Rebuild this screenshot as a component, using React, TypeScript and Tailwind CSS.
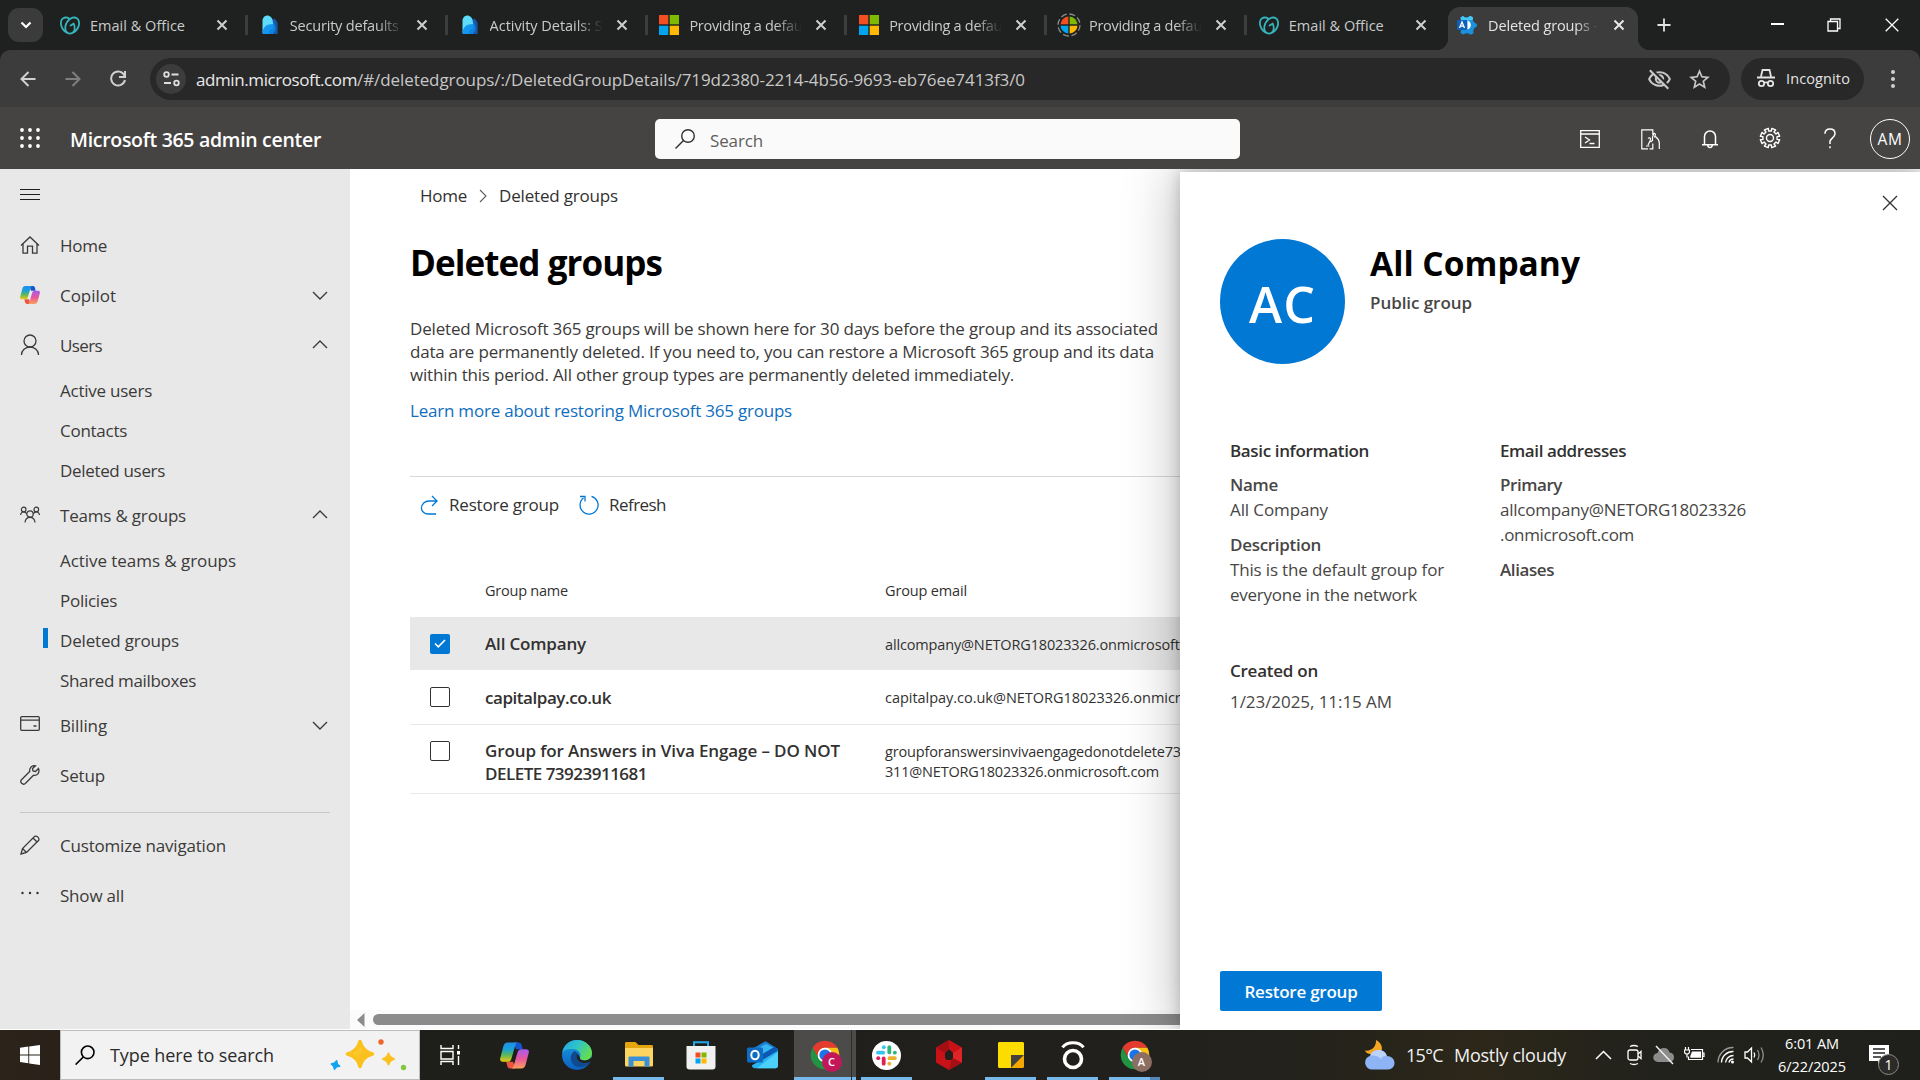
import { useLayoutEffect, useRef } from "react";
import type { ReactNode } from "react";
import { SiGodaddy } from "react-icons/si";
import { MdOutlineVisibilityOff, MdStarBorder } from "react-icons/md";

/* Single line of text whose letter spacing is adjusted so that it spans exactly `w` pixels. */
function Fit({ w, className = "", children }: { w: number; className?: string; children: string }) {
  const ref = useRef<HTMLSpanElement>(null);
  useLayoutEffect(() => {
    const el = ref.current;
    if (!el) return;
    el.style.letterSpacing = "0px";
    const natural = el.getBoundingClientRect().width;
    el.style.letterSpacing = `${(w - natural) / children.length}px`;
  }, [w, children]);
  return (
    <span ref={ref} className={`inline-block w-max shrink-0 whitespace-pre ${className}`}>
      {children}
    </span>
  );
}

type SvgProps = { w: number; h: number; vb?: string; className?: string; sw?: number; children: ReactNode };
function Line({ w, h, vb, className = "", sw = 1.3, children }: SvgProps) {
  return (
    <svg width={w} height={h} viewBox={vb ?? `0 0 ${w} ${h}`} fill="none" stroke="currentColor" strokeWidth={sw} className={`shrink-0 ${className}`}>
      {children}
    </svg>
  );
}

/* ---------- favicons ---------- */
const GoDaddy = () => <SiGodaddy className="size-[21px] text-[#35b5bd]" />;
const Entra = () => (
  <svg width="20" height="20" viewBox="0 0 20 20">
    <path d="M11 4l3-.3c2 .6 3.600 2.800 3.600 5V19H9z" fill="#1a56a8" />
    <path d="M5 9l7-3c3 2 3.500 5 3.500 9L13 19H5z" fill="#0a84e0" />
    <path d="M2.500 18V6C2.500 2.500 5 .3 8 .5c3.500.8 5 4 5 8v2L6 15z" fill="#5fdcfb" />
    <path d="M2.500 19c0-6 3-10 10.500-10v5c-3 0-4 2-4 5z" fill="#1597f0" />
  </svg>
);
const MsLogo = () => (
  <svg width="20" height="20" viewBox="0 0 20 20">
    <path fill="#f25022" d="M0 0h9.300v9.300H0z" />
    <path fill="#7fba00" d="M10.700 0H20v9.300h-9.300z" />
    <path fill="#00a4ef" d="M0 10.700h9.300V20H0z" />
    <path fill="#ffb900" d="M10.700 10.700H20V20h-9.300z" />
  </svg>
);
const MsLoading = () => (
  <svg width="24" height="24" viewBox="0 0 24 24" className="shrink-0">
    <path fill="#f25022" d="M11.300 11.300V3.500a8.500 8.500 0 0 0-7.800 7.800z" />
    <path fill="#7fba00" d="M12.700 11.300V3.500a8.500 8.500 0 0 1 7.800 7.800z" />
    <path fill="#00a4ef" d="M11.300 12.700v7.800a8.500 8.500 0 0 1-7.800-7.800z" />
    <path fill="#ffb900" d="M12.700 12.700v7.800a8.500 8.500 0 0 0 7.800-7.800z" />
    <circle cx="12" cy="12" r="11" fill="none" stroke="#8a8a8a" strokeWidth="1.300" strokeDasharray="6 2.640" />
  </svg>
);
const AdminIcon = () => (
  <svg width="20" height="20" viewBox="0 0 20 20" className="shrink-0">
    <path d="M6 1l2 1.500h3L13 .8l3 1.500-.3 3 2 2.500 2.200 1.200v2.500l-2.500 1.500-1.200 3 .3 2.500-3 1.300-2.500-1.500h-2L6.500 19.500l-3-1.500.5-3V5L3.500 2.500z" fill="#1b8fe0" />
    <path d="M6 1l2 1.500h3L13 .8l3 1.500-.3 3H4L3.500 2.500z" fill="#46c8f5" />
    <rect x="0" y="5" width="10" height="10" rx="1" fill="#0f5fb8" />
    <path d="M10.500 5.500a4.700 4.700 0 0 1 0 9z" fill="#fff" />
    <path d="M2.500 13L5 7l2.500 6M3.300 11.200h3.400" fill="none" stroke="#fff" strokeWidth="1.300" />
  </svg>
);

const CloseX = ({ bright = false }: { bright?: boolean }) => (
  <Line w={12} h={12} sw={2} className={bright ? "text-[#e8e8e8]" : "text-[#cfcfcf]"}>
    <path d="M1.500 1.500l9 9M10.500 1.500l-9 9" />
  </Line>
);

const tabs: { icon: ReactNode; text: string; w: number; fade: boolean; sep: boolean }[] = [
  { icon: <GoDaddy />, text: "Email & Office", w: 95, fade: false, sep: true },
  { icon: <Entra />, text: "Security defaults", w: 109, fade: true, sep: true },
  { icon: <Entra />, text: "Activity Details: S", w: 113, fade: true, sep: true },
  { icon: <MsLogo />, text: "Providing a defau", w: 113, fade: true, sep: true },
  { icon: <MsLogo />, text: "Providing a defau", w: 113, fade: true, sep: true },
  { icon: <MsLoading />, text: "Providing a defau", w: 113, fade: true, sep: true },
  { icon: <GoDaddy />, text: "Email & Office", w: 95, fade: false, sep: false },
];

function TabStrip() {
  return (
    <div className="flex h-[50px] items-start bg-[#1f2120] text-[14.5px] text-[#c9cac9]">
      <div className="mt-2 ml-2 flex h-[34px] w-[35px] items-center justify-center rounded-[11px] bg-[#3a3b3a]">
        <Line w={12} h={8} sw={2.2} className="text-white">
          <path d="M1.500 1.500L6 6l4.500-4.500" />
        </Line>
      </div>
      <div className="ml-[3px] flex h-[50px] w-[1399px]">
        {tabs.map((t, i) => (
          <div key={i} className="flex w-[199.8px] shrink-0 items-center pl-[14px]">
            <div className="flex w-5 shrink-0 justify-center">{t.icon}</div>
            <div className={t.fade ? "ml-[10px] w-[114px] shrink-0 overflow-hidden [mask-image:linear-gradient(to_right,black_76%,transparent_99%)]" : "ml-[10px] w-[114px] shrink-0"}>
              <Fit w={t.w} className="translate-y-px">{t.text}</Fit>
            </div>
            <div className="ml-3"><CloseX /></div>
            {t.sep && <div className="ml-[17px] h-5 w-[3px] shrink-0 bg-[#3c3d3c]" />}
          </div>
        ))}
      </div>
      <div className="relative mt-[7px] ml-[3px] flex h-[43px] w-[190px] items-center rounded-t-[12px] bg-[#3c3c3c] pb-[7px] pl-[9px] text-[#e3e3e3]">
        <div className="absolute bottom-0 -left-3 size-3 bg-[radial-gradient(circle_at_0_0,transparent_12px,#3c3c3c_12.500px)]" />
        <div className="absolute -right-3 bottom-0 size-3 bg-[radial-gradient(circle_at_100%_0,transparent_12px,#3c3c3c_12.500px)]" />
        <AdminIcon />
        <div className="ml-[11px] w-[110px] [mask-image:linear-gradient(to_right,black_80%,transparent)]">
          <Fit w={110} className="translate-y-px">Deleted groups -</Fit>
        </div>
        <div className="ml-[15px]"><CloseX bright /></div>
      </div>
      <div className="flex h-[50px] flex-1 items-center text-[#e3e3e3]">
        <Line w={14} h={14} sw={1.8} className="ml-[19px]"><path d="M7 .5v13M.5 7h13" /></Line>
        <div className="ml-[100px] h-[1.500px] w-[13px] -translate-y-px bg-white" />
        <Line w={14} h={14} sw={1.3} className="ml-[43px] text-white">
          <path d="M1 3.500h9.500V13H1zM3.500 3.500V1H13v9.500h-2.500" />
        </Line>
        <Line w={14} h={14} sw={1.3} className="ml-[44px] text-white"><path d="M.7.700l12.600 12.600M13.300.7L.7 13.300" /></Line>
      </div>
    </div>
  );
}

function AddressBar() {
  return (
    <div className="bg-[#1f2120]">
      <div className="flex h-[57px] items-center rounded-t-[10px] bg-[#3c3c3c]">
        <Line w={16} h={16} sw={2} className="ml-5 text-[#cfd0d0]"><path d="M15.500 8H1.800M8.500 1L1.500 8l7 7" /></Line>
        <Line w={16} h={16} sw={2} className="ml-[29px] text-[#7f7f7f]"><path d="M.5 8h13.700M7.500 1l7 7-7 7" /></Line>
        <Line w={18} h={18} sw={2} className="ml-7 text-[#cfd0d0]"><path d="M15.500 5.500A7 7 0 1 0 16 10M16 1v6h-6" /></Line>
        <div className="ml-[23px] flex h-[42px] w-[1580px] items-center rounded-full bg-[#282828]">
          <div className="ml-[6px] flex size-[30px] shrink-0 items-center justify-center rounded-full bg-[#3c3c3c]">
            <Line w={17} h={16} sw={1.8} className="text-[#dedede]">
              <circle cx="3.500" cy="3.500" r="2.300" /><path d="M8.500 3.500h7M1 12h7" /><circle cx="13.500" cy="12" r="2.300" />
            </Line>
          </div>
          <div className="ml-[10px] flex w-[1451px] translate-y-px text-[17px] text-[#c7c7c7]">
            <Fit w={161} className="text-[#e8e8e8]">admin.microsoft.com</Fit>
            <Fit w={668}>/#/deletedgroups/:/DeletedGroupDetails/719d2380-2214-4b56-9693-eb76ee7413f3/0</Fit>
          </div>
          <MdOutlineVisibilityOff className="size-[25px] shrink-0 translate-y-px text-[#c7c7c7]" />
          <MdStarBorder className="ml-[15px] size-[25px] shrink-0 translate-y-px text-[#c7c7c7]" />
        </div>
        <div className="ml-[11px] flex h-[42px] w-[123px] items-center rounded-full bg-[#282828] text-[14.5px] text-[#e3e3e3]">
          <svg width="18" height="20" viewBox="0 0 18 20" className="mr-[11px] ml-4 -translate-y-px" fill="none" stroke="currentColor" strokeWidth="1.800">
            <path d="M4 8.500L5.500 2h7L14 8.500M0 9.500h18" /><circle cx="4.500" cy="15.500" r="2.700" /><circle cx="13.500" cy="15.500" r="2.700" /><path d="M7 14.800q2-1 4 0" />
          </svg>
          <Fit w={64}>Incognito</Fit>
        </div>
        <svg width="6" height="22" viewBox="0 0 6 22" className="ml-[26px]" fill="#cfd0d0">
          <circle cx="3" cy="4" r="2" /><circle cx="3" cy="11" r="2" /><circle cx="3" cy="18" r="2" />
        </svg>
      </div>
    </div>
  );
}

function gearPath(cx: number, cy: number, ro: number, ri: number, n: number) {
  const pts: string[] = [];
  for (let i = 0; i < n; i++) {
    const a = ((i + 0.5) / n) * Math.PI * 2 - Math.PI / 2;
    const s = Math.PI / n;
    [[-0.5, ri], [-0.55, ro], [0.55, ro], [0.5, ri]].forEach(([k, r]) => {
      pts.push(`${(cx + Math.cos(a + k * s) * r).toFixed(2)} ${(cy + Math.sin(a + k * s) * r).toFixed(2)}`);
    });
  }
  return `M${pts.join("L")}Z`;
}

function Header() {
  return (
    <div className="flex h-[62px] items-center bg-[#464443] pt-[2px] text-white">
      <svg width="20" height="20" viewBox="0 0 20 20" fill="#fff" className="ml-5 -translate-y-px">
        {[2, 10, 18].map((y) => [2, 10, 18].map((x) => <circle key={`${x}-${y}`} cx={x} cy={y} r="1.900" />))}
      </svg>
      <div className="ml-[30px] w-[585px] text-[19.5px] font-semibold"><Fit w={251} className="translate-y-px">Microsoft 365 admin center</Fit></div>
      <div className="flex h-10 w-[585px] items-center rounded-[5px] bg-[#fafafa] pl-5 text-[17px] text-[#605e5c]">
        <Line w={20} h={20} sw={1.4} className="text-[#323130]"><circle cx="13" cy="7" r="6.300" /><path d="M8.500 11.500L.5 19.500" /></Line>
        <Fit w={53} className="ml-[15px] translate-y-[2px]">Search</Fit>
      </div>
      <Line w={20} h={18} className="ml-[340px]"><path d="M.7.700h18.600v16.600H.7zM.7 4h18.600M5 7l4.500 3L5 13M9.500 13.500h5" /></Line>
      <Line w={19} h={21} className="ml-[41px]" sw={1.2}>
        <path d="M7 19.800H.8V.8h11v5M5 17h3.500M11.800 14.500v5.300H8.500M7 9.500c1.500-1.500 3.500-.5 2 2.500l-2 4M9.500 13l2-1.500V8l1.300-3.500c1-.5 1.700.3 1.500 1.300L13.500 8.500M14.500 7.500c2.500 2 3.800 3.500 3.800 6.500v6" />
      </Line>
      <Line w={16} h={20} className="ml-[42px]" sw={1.5}><path d="M2.500 15.500V7.500a5.500 5.500 0 0 1 11 0v8M0 15.800h16M5.800 16.500c.3 2.600 4.100 2.600 4.400 0" /></Line>
      <Line w={22} h={22} className="ml-[41px] -translate-y-px" sw={1.4}><path strokeLinejoin="round" d={gearPath(11, 11, 9.800, 7.2, 8)} /><circle cx="11" cy="11" r="3.500" /></Line>
      <Line w={12} h={21} className="ml-[43px] -translate-y-px" sw={1.5}><path d="M1 5.800C1 3 3 1 6 1s5 2 5 4.700c0 4-5 4.800-5 8V16M6 18.300v2" /></Line>
      <div className="ml-[34px] flex size-10 items-center justify-center rounded-full border-[1.500px] border-white pt-[2px] text-[15.5px]">
        <Fit w={25}>AM</Fit>
      </div>
    </div>
  );
}

/* ---------- sidebar ---------- */
function Copilot({ size, id }: { size: number; id: string }) {
  return (
    <svg width={size} height={size} viewBox="0 0 30 30" className="shrink-0">
      <defs>
        <linearGradient id={`${id}a`} x1="0" y1="0" x2="0" y2="1">
          <stop offset="0" stopColor="#1f8fe8" /><stop offset=".35" stopColor="#1aa0d8" /><stop offset=".65" stopColor="#5cb85a" /><stop offset="1" stopColor="#f3c80c" />
        </linearGradient>
        <linearGradient id={`${id}b`} x1="0" y1="0" x2="0" y2="1">
          <stop offset="0" stopColor="#a55cf0" /><stop offset=".5" stopColor="#e8579b" /><stop offset="1" stopColor="#fba05c" />
        </linearGradient>
      </defs>
      <path d="M14 1.500h5c2 0 3 1 3.500 3l1 4h-7z" fill="#1556cf" />
      <path d="M16 28.500h-5c-2 0-3-1-3.500-3l-1-4h7z" fill="#ee5540" />
      <path d="M8 1.500h11c-2 0-2.700 1.500-3.300 3.500l-4 13.500c-.6 2-1.700 3-3.700 3H3c-2.500 0-3.300-1.500-2.700-4L3.500 5.500C4.200 3 5.500 1.500 8 1.500z" fill={`url(#${id}a)`} />
      <path d="M22 28.500H11c2 0 2.700-1.500 3.300-3.500l4-13.500c.6-2 1.700-3 3.700-3h5c2.500 0 3.300 1.500 2.700 4l-3.200 12c-.7 2.500-2 4-4.500 4z" fill={`url(#${id}b)`} />
    </svg>
  );
}

const Chevron = ({ up }: { up: boolean }) => (
  <Line w={16} h={9} sw={1.4} className={up ? "-translate-y-px rotate-180" : ""}><path d="M1 1l7 7 7-7" /></Line>
);

function NavItem({ icon, label, w, chev }: { icon: ReactNode; label: string; w: number; chev?: "up" | "down" }) {
  return (
    <div className="flex h-[50px] items-center pr-[22px] pl-5">
      <div className="flex w-5 shrink-0 justify-center">{icon}</div>
      <div className="ml-5 flex-1"><Fit w={w} className="translate-y-px">{label}</Fit></div>
      {chev && <Chevron up={chev === "up"} />}
    </div>
  );
}

function SubItem({ label, w, active }: { label: string; w: number; active?: boolean }) {
  return (
    <div className="flex h-10 items-center">
      <div className={active ? "ml-[43px] h-5 w-[5px] -translate-y-0.5 bg-[#0078d4]" : "ml-[43px] w-[5px]"} />
      <Fit w={w} className="ml-3 translate-y-px">{label}</Fit>
    </div>
  );
}

function Sidebar() {
  return (
    <div className="h-full w-[350px] shrink-0 bg-[#e8e8e8] text-[17px] text-[#3b3a39]">
      <div className="flex h-[51px] items-center pb-1 pl-5">
        <Line w={20} h={12} sw={1.2} className="translate-y-[2px] text-[#201f1e]"><path d="M0 .5h20M0 5.500h20M0 10.500h20" /></Line>
      </div>
      <NavItem label="Home" w={47} icon={<Line w={20} h={18}><path d="M1 9.500L10 1l9 8.500M3 8v9.200h4.500v-7h5v7H17V8" /></Line>} />
      <NavItem label="Copilot" w={56} chev="down" icon={<Copilot size={20} id="nav" />} />
      <NavItem label="Users" w={42} chev="up" icon={<Line w={20} h={22}><circle cx="10" cy="7" r="6" /><path d="M1.500 21a8.500 8 0 0 1 17 0" /></Line>} />
      <SubItem label="Active users" w={92} />
      <SubItem label="Contacts" w={67} />
      <SubItem label="Deleted users" w={105} />
      <NavItem
        label="Teams & groups" w={126} chev="up"
        icon={<Line w={20} h={18} sw={1.2}><circle cx="3.700" cy="3.500" r="2.300" /><circle cx="16.300" cy="3.500" r="2.300" /><circle cx="10" cy="8" r="3.200" /><path d="M.5 9c.3-2 1.500-3 3.200-3 1.500 0 2.500.8 3 2M19.500 9c-.3-2-1.500-3-3.200-3-1.500 0-2.500.8-3 2M5 16.500c.3-3.200 2-5.200 5-5.200s4.700 2 5 5.200" /></Line>}
      />
      <SubItem label="Active teams & groups" w={176} />
      <SubItem label="Policies" w={57} />
      <SubItem label="Deleted groups" w={119} active />
      <SubItem label="Shared mailboxes" w={136} />
      <NavItem label="Billing" w={47} chev="down" icon={<Line w={20} h={15} className="-translate-y-0.5"><rect x=".7" y=".7" width="18.600" height="13.600" rx="1" /><path d="M.7 4.200h18.600M13.500 10h3" /></Line>} />
      <NavItem
        label="Setup" w={45}
        icon={<Line w={20} h={20}><path d="M18.500 3.500l-3 3-2.500-.5-.5-2.500 3-2.700c-3-.8-6.300 1.500-5.800 5.700L1.500 14.700a2.700 2.700 0 0 0 3.800 3.800l8.200-8.200c4 .6 6.500-3 5-6.800z" /></Line>}
      />
      <div className="mx-5 mt-3 mb-[7px] h-px bg-[#c8c6c4]" />
      <NavItem label="Customize navigation" w={166} icon={<Line w={20} h={20}><path d="M1 19l1.500-5.500L14.700 1.300c2.200-1 5 1.800 4 4L6.500 17.500zM2.500 13.500l4 4M13 3l4 4M1 19l3-1" /></Line>} />
      <NavItem
        label="Show all" w={64}
        icon={<svg width="20" height="4" viewBox="0 0 20 4" fill="#323130" className="-translate-y-0.5"><circle cx="2.500" cy="2" r="1.200" /><circle cx="10" cy="2" r="1.200" /><circle cx="17.500" cy="2" r="1.200" /></svg>}
      />
    </div>
  );
}

/* ---------- main ---------- */
function CheckBox({ on }: { on?: boolean }) {
  return on ? (
    <div className="flex size-5 shrink-0 items-center justify-center rounded-[2px] bg-[#0078d4] text-white">
      <Line w={12} h={9} sw={1.6}><path d="M1 4.500L4.300 7.800 11 1" /></Line>
    </div>
  ) : (
    <div className="size-5 shrink-0 rounded-[2px] border border-[#323130] bg-white" />
  );
}

function MainArea() {
  return (
    <div className="flex h-full w-[830px] shrink-0 flex-col overflow-hidden bg-white text-[17px] text-[#323130]">
      <div className="mt-[14px] flex h-[25px] items-center pl-[70px]">
        <Fit w={47}>Home</Fit>
        <Line w={8} h={14} sw={1.1} className="mx-3 text-[#605e5c]"><path d="M1 1l6 6-6 6" /></Line>
        <Fit w={119}>Deleted groups</Fit>
      </div>
      <div className="mt-8 flex h-[46px] items-center pl-[60px] text-[35px] font-bold text-black"><Fit w={252}>Deleted groups</Fit></div>
      <div className="mt-[31px] flex flex-col pl-[60px] leading-[23px] text-[#3b3a39]">
        <Fit w={748}>Deleted Microsoft 365 groups will be shown here for 30 days before the group and its associated</Fit>
        <Fit w={744}>data are permanently deleted. If you need to, you can restore a Microsoft 365 group and its data</Fit>
        <Fit w={604}>within this period. All other group types are permanently deleted immediately.</Fit>
        <Fit w={382} className="mt-[13px] text-[#106ebe]">Learn more about restoring Microsoft 365 groups</Fit>
      </div>
      <div className="mt-[54px] ml-[60px] h-px shrink-0 bg-[#d8d8d8]" />
      <div className="mt-[3px] flex h-[50px] items-center pl-[70px]">
        <Line w={18} h={20} className="text-[#0078d4]"><path d="M17 6H9a7.500 7 0 0 0-7.500 7c0 3.500 3 6 6.500 6h8M12 1l5 5-5 5" /></Line>
        <Fit w={110} className="ml-[11px]">Restore group</Fit>
        <Line w={20} h={20} className="ml-5 text-[#0078d4]"><path d="M12.500 1.400A9 9 0 1 1 4.500 3M1 1.500h5v5" /></Line>
        <Fit w={57} className="ml-[10px]">Refresh</Fit>
      </div>
      <div className="mt-[34px] flex h-[53px] items-center pl-[135px] text-[14.5px]">
        <div className="w-[400px]"><Fit w={83}>Group name</Fit></div>
        <Fit w={82}>Group email</Fit>
      </div>
      <div className="ml-[60px] flex h-[53px] items-center bg-[#e8e8e8] pl-5">
        <CheckBox on />
        <div className="ml-[35px] w-[400px] shrink-0 font-semibold"><Fit w={101}>All Company</Fit></div>
        <Fit w={327} className="translate-y-px text-[14.5px]">allcompany@NETORG18023326.onmicrosoft.com</Fit>
      </div>
      <div className="ml-[60px] flex h-[55px] items-center border-b border-[#e8e8e8] pl-5">
        <CheckBox />
        <div className="ml-[35px] w-[400px] shrink-0 font-semibold"><Fit w={126} className="translate-y-px">capitalpay.co.uk</Fit></div>
        <Fit w={330} className="translate-y-px text-[14.5px]">capitalpay.co.uk@NETORG18023326.onmicrosoft</Fit>
      </div>
      <div className="ml-[60px] flex h-[69px] items-start border-b border-[#e8e8e8] pl-5">
        <div className="mt-4"><CheckBox /></div>
        <div className="mt-[14px] ml-[35px] flex w-[400px] shrink-0 flex-col leading-[23px] font-semibold">
          <Fit w={355}>Group for Answers in Viva Engage – DO NOT</Fit>
          <Fit w={162}>DELETE 73923911681</Fit>
        </div>
        <div className="mt-[17px] flex flex-col text-[14.5px] leading-5">
          <Fit w={296}>groupforanswersinvivaengagedonotdelete73</Fit>
          <Fit w={274}>311@NETORG18023326.onmicrosoft.com</Fit>
        </div>
      </div>
      <div className="flex-1" />
      <div className="flex h-[19px] shrink-0 items-center bg-[#fbfbfb] pl-[7px]">
        <svg width="8" height="14" viewBox="0 0 8 14"><path d="M7.500 0v14L0 7z" fill="#8b8b8b" /></svg>
        <div className="ml-2 h-[11px] flex-1 rounded-l-full bg-[#8b8b8b]" />
      </div>
    </div>
  );
}

function Panel() {
  return (
    <div className="absolute top-[3px] right-0 bottom-0 flex w-[740px] flex-col bg-white text-[17px] text-[#484644] shadow-[0_0_50px_4px_rgba(0,0,0,0.25),0_0_14px_0_rgba(0,0,0,0.2)]">
      <div className="flex h-[63px] items-center justify-end pr-[22px]">
        <Line w={16} h={16} sw={1.3} className="-translate-y-px text-[#323130]"><path d="M1 1l14 14M15 1L1 15" /></Line>
      </div>
      <div className="flex pl-10">
        <div className="mt-1 flex size-[125px] items-center justify-center rounded-full bg-[#0078d4] text-[50px] font-semibold text-white"><Fit w={67} className="translate-y-[3px]">AC</Fit></div>
        <div className="ml-[25px] flex flex-col">
          <Fit w={210} className="mt-[6px] text-[33.5px] leading-[44px] font-bold text-black">All Company</Fit>
          <Fit w={102} className="mt-[5px] leading-[25px] font-semibold">Public group</Fit>
        </div>
      </div>
      <div className="mt-[74px] flex pl-[50px] leading-[25px]">
        <div className="flex w-[270px] flex-col">
          <Fit w={139} className="font-semibold text-[#323130]">Basic information</Fit>
          <Fit w={48} className="mt-[9px] font-semibold">Name</Fit>
          <Fit w={98}>All Company</Fit>
          <Fit w={91} className="mt-[10px] font-semibold">Description</Fit>
          <Fit w={214}>This is the default group for</Fit>
          <Fit w={187}>everyone in the network</Fit>
          <Fit w={88} className="mt-[51px] font-semibold text-[#323130]">Created on</Fit>
          <Fit w={162} className="mt-[6px]">1/23/2025, 11:15 AM</Fit>
        </div>
        <div className="flex flex-col">
          <Fit w={126} className="font-semibold text-[#323130]">Email addresses</Fit>
          <Fit w={62} className="mt-[9px] font-semibold">Primary</Fit>
          <Fit w={246}>allcompany@NETORG18023326</Fit>
          <Fit w={134}>.onmicrosoft.com</Fit>
          <Fit w={54} className="mt-[10px] font-semibold">Aliases</Fit>
        </div>
      </div>
      <div className="flex-1" />
      <div className="mb-[18px] ml-10 flex h-10 w-[162px] items-center justify-center rounded-[2px] bg-[#0078d4] font-semibold text-white"><Fit w={113} className="translate-y-px">Restore group</Fit></div>
    </div>
  );
}

/* ---------- taskbar ---------- */
function Chrome({ badge, letter }: { badge: string; letter: string }) {
  const seg = "M24 13H43.050A22 22 0 0 0 4.950 13L14.470 29.500A11 11 0 0 1 24 13Z";
  return (
    <div className="relative size-[30px]">
      <svg width="30" height="30" viewBox="1 1 46 46">
        <circle cx="24" cy="24" r="12" fill="#fff" />
        <path d={seg} fill="#e33b2e" />
        <path d={seg} fill="#fbc116" transform="rotate(120 24 24)" />
        <path d={seg} fill="#229342" transform="rotate(240 24 24)" />
        <circle cx="24" cy="24" r="11" fill="#fff" />
        <circle cx="24" cy="24" r="8.600" fill="#1a73e8" />
      </svg>
      <div className={`absolute top-[12px] left-[12px] flex size-5 items-center justify-center rounded-full text-[11px] font-semibold text-white ${badge}`}>{letter}</div>
    </div>
  );
}

function Edge() {
  return (
    <svg width="30" height="30" viewBox="0 0 30 30">
      <defs>
        <linearGradient id="edgeTop" x1="0" y1="0" x2="1" y2=".5"><stop offset="0" stopColor="#1fa3e3" /><stop offset=".5" stopColor="#2fc3c9" /><stop offset="1" stopColor="#62dd50" /></linearGradient>
        <linearGradient id="edgeLow" x1="0" y1="0" x2="0" y2="1"><stop offset="0" stopColor="#1b9de2" /><stop offset="1" stopColor="#0b5fc0" /></linearGradient>
      </defs>
      <circle cx="15" cy="15" r="15" fill="url(#edgeLow)" />
      <path d="M.2 13C1.500 5 7.500 0 15 0c8.500 0 15 6 15 13 0 5-3.500 7.500-7.500 7.500-3.500 0-5-1.500-4.500-2.800 1.500-3.500-.5-8.200-7-8.700C6 8.500 1.500 10 .2 13z" fill="url(#edgeTop)" />
      <path d="M12.500 11c-4.500 3-5 9-1.500 13 3 3.500 8 4 13 2 2-1 3.500-2.500 4.300-4.300-3.300 2-8.300 2-11-.2-2.800-2.300-3-5.500-1.300-7.500-1-1.500-2-2.500-3.500-3z" fill="#104a8e" />
      <path d="M18 17.700c-.5 1.300 1 2.800 4.500 2.800 3 0 5.500-1.500 6.700-3.500l1.300 3.500-2.500 1.500c-3.300 1.500-8.300 1.500-11-.7-2.500-2-2.800-5.500-1.300-7.500z" fill="#20211e" />
    </svg>
  );
}

const Explorer = () => (
  <svg width="30" height="28" viewBox="0 0 30 28">
    <path d="M1 2.500C1 1.500 1.500 1 2.500 1h9l3 3h13c1 0 1.500.5 1.500 1.500V10H1z" fill="#e5a50f" />
    <path d="M1 7h28v17c0 1-.5 1.500-1.500 1.500h-25C1.500 25.500 1 25 1 24z" fill="#fcd462" />
    <path d="M6 15.500h18c1 0 1.500.5 1.500 1.500v8.500h-5V20H9.500v5.500h-5V17c0-1 .5-1.500 1.500-1.500z" fill="#3a8fd6" />
  </svg>
);
const Store = () => (
  <svg width="30" height="30" viewBox="0 0 30 30">
    <path d="M8 7V2.200h14V7" fill="none" stroke="#25a7e8" strokeWidth="2" />
    <path d="M.5 6h29v20.500c0 2-1 3-3 3h-23c-2 0-3-1-3-3z" fill="#f1f1f1" />
    <path fill="#f25022" d="M9.500 12.500h5v5h-5z" /><path fill="#7fba00" d="M15.500 12.500h5v5h-5z" /><path fill="#00a4ef" d="M9.500 18.500h5v5h-5z" /><path fill="#ffb900" d="M15.500 18.500h5v5h-5z" />
  </svg>
);
const Outlook = () => (
  <svg width="31" height="28" viewBox="0 0 31 28">
    <path d="M5 8L17.500.7c.7-.4 1.300-.4 2 0L31 8v6H5z" fill="#1d7fd0" />
    <path d="M8 9L19 3l8 4-14 9z" fill="#35b6f0" />
    <path d="M31 9.500v15c0 1.500-1 2.700-2.700 2.700H8c-2 0-3-1-3-3L25 13z" fill="#28b4f0" />
    <path d="M31 9.500L12 21v-6L28 5.500z" fill="#0b58b5" />
    <path d="M31 11L10 27.200h18.300c1.700 0 2.700-1.200 2.700-2.700z" fill="#4cd0fb" />
    <rect x="0" y="6.500" width="16" height="15" rx="1.500" fill="#0f6cc4" />
    <ellipse cx="8" cy="14" rx="3.700" ry="4.200" fill="none" stroke="#fff" strokeWidth="2" />
  </svg>
);
const Slack = () => (
  <svg width="29" height="29" viewBox="0 0 29 29">
    <circle cx="14.500" cy="14.500" r="14.500" fill="#fff" />
    <g strokeWidth="3.800" strokeLinecap="round">
      <path d="M6 11.700h5.200" stroke="#36c5f0" /><path d="M11.800 6.200v.1" stroke="#36c5f0" />
      <path d="M17.300 6.200v5.200" stroke="#2eb67d" /><path d="M22.800 11.700h.1" stroke="#2eb67d" />
      <path d="M17.500 17.200h5.300" stroke="#ecb22e" /><path d="M17.300 22.600v.1" stroke="#ecb22e" />
      <path d="M11.700 17.500v5.200" stroke="#e01e5a" /><path d="M6.200 17.200h.1" stroke="#e01e5a" />
    </g>
  </svg>
);
const RedHex = () => (
  <svg width="26" height="30" viewBox="0 0 26 30">
    <path fillRule="evenodd" d="M13 0l13 7.500v15L13 30 0 22.500v-15zM13 9l-4 4v5l1.500 2h5l1.500-2v-5z" fill="#c91218" />
    <path d="M0 7.500L13 0v9l-4 4zM15.500 20l1.500-2 9 4.500L13 30z" fill="#a50f14" />
    <path d="M26 7.500L17 13v5l9 4.500z" fill="#e0242a" />
  </svg>
);
const Sticky = () => (
  <svg width="26" height="26" viewBox="0 0 26 26">
    <path d="M1 0h24l1 1v12L13 26H1l-1-1V1z" fill="#fddc00" />
    <path d="M13 13h13L13 26z" fill="#45423d" /><path d="M26 13v12l-1 1H13z" fill="#f5a800" />
  </svg>
);
const RingHat = () => (
  <svg width="24" height="30" viewBox="0 0 24 30" fill="none" stroke="#fff">
    <circle cx="12" cy="19" r="8.500" strokeWidth="3.600" /><path d="M1.500 7.300C6 1.200 18 1.200 22.500 7.300" strokeWidth="3" />
  </svg>
);

function TaskApp({ children, state }: { children: ReactNode; state?: "open" | "active" | "stack" }) {
  return (
    <div className={state === "active" ? "relative flex h-[50px] w-[62px] items-center justify-center bg-[#4c4b49]" : "relative flex h-[50px] w-[62px] items-center justify-center"}>
      {children}
      {state && <div className={state === "active" ? "absolute inset-x-0 bottom-0 h-[3px] bg-[#76b9ed]" : "absolute bottom-0 left-[5.500px] h-[3px] w-[51px] bg-[#76b9ed]"} />}
      {state === "stack" && <div className="absolute right-[5.500px] bottom-0 h-[3px] w-[10px] bg-[#5489b5]" />}
      {state === "active" && <div className="absolute top-0 right-[4px] h-[50px] w-px bg-[#2e2d2b]" />}
    </div>
  );
}

const sparkle = (x: number, y: number, r: number) => {
  const k = r * 0.28;
  return `M${x} ${y - r}Q${x + k * 0.7} ${y - k * 0.7} ${x + r} ${y}Q${x + k * 0.7} ${y + k * 0.7} ${x} ${y + r}Q${x - k * 0.7} ${y + k * 0.7} ${x - r} ${y}Q${x - k * 0.7} ${y - k * 0.7} ${x} ${y - r}Z`;
};

function Taskbar() {
  return (
    <div className="mt-px flex h-[50px] items-center bg-[linear-gradient(to_right,#2c231a_0,#2a221a_60px,#1e1e1b_420px,#21201d_1100px,#23221b_1300px,#2c2719_1480px,#22221c_1650px,#1f201c_100%)] text-white">
      <div className="flex w-[60px] justify-center">
        <svg width="20" height="20" viewBox="0 0 20 20" fill="#fff"><path d="M0 2.800l8.300-1.200v7.900H0zM9.200 1.500L20 0v9.500H9.200zM0 10.400h8.300v7.900L0 17.100zM9.200 10.400H20V20L9.200 18.400z" /></svg>
      </div>
      <div className="flex h-[50px] w-[360px] items-center border border-[#bdbcba] bg-[#f2f2f2] text-[#2b2b2b]">
        <Line w={20} h={20} sw={1.6} className="ml-[14px] text-black"><circle cx="12.700" cy="7.300" r="6.300" /><path d="M8.300 12L.6 19.600" /></Line>
        <div className="ml-[15px] w-[220px] text-[18px]"><Fit w={164}>Type here to search</Fit></div>
        <svg width="78" height="36" viewBox="0 0 78 36">
          <defs><linearGradient id="gold" x1="0" y1="0" x2="1" y2="1"><stop offset="0" stopColor="#ffdf3a" /><stop offset="1" stopColor="#f5a90e" /></linearGradient></defs>
          <g strokeLinejoin="round">
            <path d={sparkle(30, 17, 12.5)} fill="url(#gold)" stroke="#fbc11f" strokeWidth="3.500" />
            <path d={sparkle(58.500, 22, 5.500)} fill="#fbc11f" stroke="#fbc11f" strokeWidth="2" />
            <path d={sparkle(5.500, 28, 4)} fill="#10a5ee" stroke="#10a5ee" strokeWidth="2" transform="rotate(15 5.500 28)" />
          </g>
          <circle cx="51" cy="5" r="2.700" fill="#f0642f" /><circle cx="73.500" cy="30.500" r="2.700" fill="#83c63f" />
        </svg>
      </div>
      <div className="flex w-[60px] justify-center">
        <Line w={20} h={20} sw={1.4}><path d="M1 0v3.500h12V0M1 6.500h12v7.500H1zM1 20v-3.500h12V20M18.500 0v4M18.500 11v9" /><path d="M18.500 6v3.500" strokeWidth="3" /></Line>
      </div>
      <div className="ml-[3.500px] flex">
        <TaskApp><Copilot size={29} id="bar" /></TaskApp>
        <TaskApp><Edge /></TaskApp>
        <TaskApp state="open"><Explorer /></TaskApp>
        <TaskApp><Store /></TaskApp>
        <TaskApp><Outlook /></TaskApp>
        <TaskApp state="active"><Chrome badge="bg-[#c2185b]" letter="C" /></TaskApp>
        <TaskApp state="open"><Slack /></TaskApp>
        <TaskApp><RedHex /></TaskApp>
        <TaskApp state="open"><Sticky /></TaskApp>
        <TaskApp state="open"><RingHat /></TaskApp>
        <TaskApp state="stack"><Chrome badge="bg-[#8d6e63]" letter="A" /></TaskApp>
      </div>
      <svg width="31" height="30" viewBox="0 0 31 30" className="ml-auto shrink-0">
        <path d="M12 0c6 3 8 9 3.500 14H6C3 13.500 1.500 12 1 10.500 7 11.500 12.500 7 12 0z" fill="#f6a623" />
        <path d="M7.500 29.500a7 7 0 0 1-1-13.800c1-3.700 4-5.700 8-5.700 4.500 0 7.500 2.500 8.300 6 4.500.2 7.700 3 7.700 6.800s-2.500 6.700-6.500 6.700z" fill="#8fb4f5" />
        <path d="M6 16c1-3.500 4.500-6 8.500-6 4.500 0 7.500 2.500 8.300 6-3-.3-5 1-6 3C14 15.500 9 15 6 16z" fill="#bcd3fb" />
      </svg>
      <div className="ml-[11px] flex text-[18px] text-[#f1f1f1]"><Fit w={37}>15°C</Fit><Fit w={112} className="ml-[11px]">Mostly cloudy</Fit></div>
      <Line w={17} h={10} sw={1.5} className="ml-[29px]"><path d="M1 9l7.500-7.500L16 9" /></Line>
      <Line w={16} h={22} sw={1.3} className="ml-[15px]"><rect x="1" y="6" width="10" height="10" rx="2" /><path d="M11 10l3-2.500v7L11 12M3 2.500q4-2 8 0M3 19.500q4 2 8 0" /></Line>
      <svg width="22" height="20" viewBox="0 0 22 20" className="ml-[10px] shrink-0"><path d="M5 17a4.500 4.500 0 0 1-.5-9C5.500 4.500 8 3 11 3s5 2 5.500 4.500c3 .2 4.500 2 4.500 4.700S19 17 16.500 17z" fill="#8c8c8a" /><path d="M3 1l17 18" stroke="#eee" strokeWidth="1.500" /></svg>
      <svg width="21" height="17" viewBox="0 0 21 17" className="ml-[9px] shrink-0" fill="none" stroke="#fff" strokeWidth="1.200"><path d="M7 2.500h11.500v10H4.500V9.500M18.500 6H20v3.500h-1.500M1.500 0v3M4.500 0v3M.5 3h5v1.500C5.500 6 4.700 7 3 7S.5 6 .5 4.500zM3 7v3.500" /><path d="M8 4.500h9v6.200H6.300V9z" fill="#fff" stroke="none" /></svg>
      <svg width="18" height="18" viewBox="0 0 18 18" className="ml-[12px] shrink-0" fill="none" strokeWidth="1.400"><path d="M1 16.500A15 15 0 0 1 16.500 1.500" stroke="#999" /><path d="M4.500 16.500a11.500 11.500 0 0 1 12-11M8.500 16.500a8 8 0 0 1 8-7" stroke="#fff" /><path d="M12 16.500a4.500 4.500 0 0 1 4.500-3.500" stroke="#fff" /><circle cx="15.500" cy="16" r="1.500" fill="#fff" /></svg>
      <svg width="21" height="18" viewBox="0 0 21 18" className="ml-[9px] shrink-0" fill="none" stroke="#fff" strokeWidth="1.300"><path d="M1 6h2.500L7.500 2v14l-4-4H1zM10 6.500q1.500 2.500 0 5" /><path d="M13.500 4q3 5 0 10M17 1.500q4.500 7.500 0 15" stroke="#8f8f8d" /></svg>
      <div className="ml-[12px] flex w-[70px] flex-col items-center text-[14.5px] leading-[23px]"><Fit w={54}>6:01 AM</Fit><Fit w={68}>6/22/2025</Fit></div>
      <div className="relative mr-[30px] ml-[22px] size-[21px] shrink-0">
        <svg width="21" height="21" viewBox="0 0 21 21"><path d="M0 0h20v16h-7l-4 4v-4H0z" fill="#fff" /><path d="M4 4h12M4 8h12M4 12h8" stroke="#222" strokeWidth="1.300" /></svg>
        <div className="absolute top-[9px] left-[9px] flex size-[21px] items-center justify-center rounded-full border border-[#8a8a88] bg-[#2c2b28] text-[14px]">1</div>
      </div>
    </div>
  );
}

export default function App() {
  return (
    <div className="h-[1080px] w-[1920px] overflow-hidden bg-white font-['Open_Sans','Noto_Sans',sans-serif]">
      <TabStrip />
      <AddressBar />
      <Header />
      <div className="relative flex h-[860px] overflow-hidden">
        <Sidebar />
        <MainArea />
        <Panel />
      </div>
      <Taskbar />
    </div>
  );
}
